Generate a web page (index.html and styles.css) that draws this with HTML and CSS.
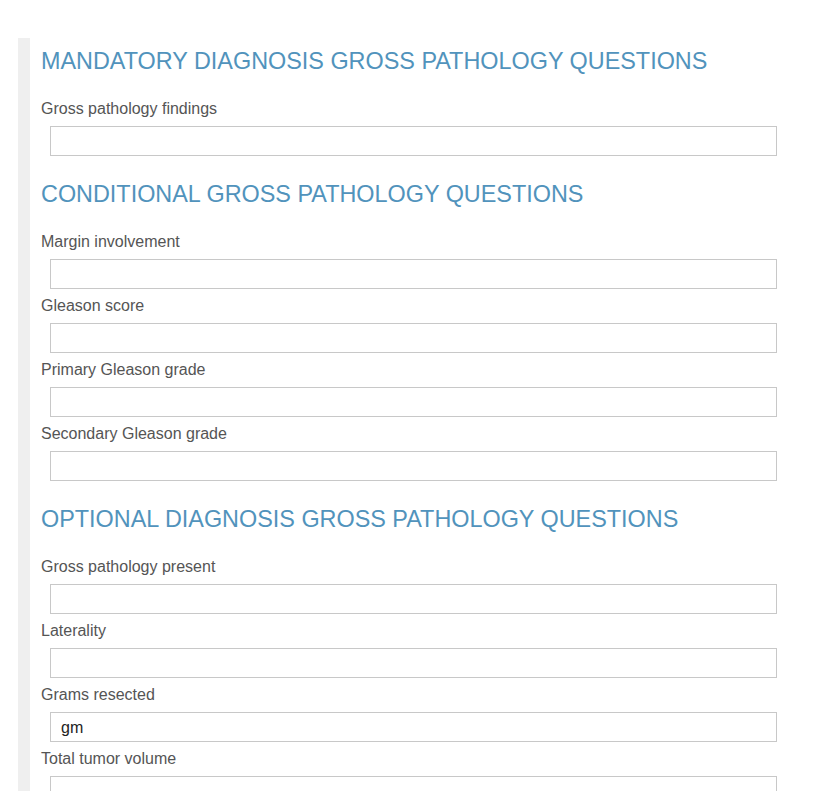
FILE: index.html
```html
<!DOCTYPE html>
<html>
<head>
<meta charset="utf-8">
<link rel="stylesheet" href="styles.css">
</head>
<body>
<div class="panel">
  <h2 class="section-title first">MANDATORY DIAGNOSIS GROSS PATHOLOGY QUESTIONS</h2>
  <div class="field"><label class="field-label">Gross pathology findings</label><input class="field-input" type="text"></div>

  <h2 class="section-title">CONDITIONAL GROSS PATHOLOGY QUESTIONS</h2>
  <div class="field"><label class="field-label">Margin involvement</label><input class="field-input" type="text"></div>
  <div class="field"><label class="field-label">Gleason score</label><input class="field-input" type="text"></div>
  <div class="field"><label class="field-label">Primary Gleason grade</label><input class="field-input" type="text"></div>
  <div class="field"><label class="field-label">Secondary Gleason grade</label><input class="field-input" type="text"></div>

  <h2 class="section-title">OPTIONAL DIAGNOSIS GROSS PATHOLOGY QUESTIONS</h2>
  <div class="field"><label class="field-label">Gross pathology present</label><input class="field-input" type="text"></div>
  <div class="field"><label class="field-label">Laterality</label><input class="field-input" type="text"></div>
  <div class="field"><label class="field-label">Grams resected</label><input class="field-input" type="text" value="gm"></div>
  <div class="field"><label class="field-label">Total tumor volume</label><input class="field-input" type="text"></div>
</div>
</body>
</html>
```

FILE: styles.css
```css
html, body {
  margin: 0;
  padding: 0;
  background: #fff;
  font-family: "Liberation Sans", Arial, sans-serif;
}

.panel {
  margin: 38px 0 0 18px;
  border-left: 12px solid #efefef;
  padding: 8px 55px 40px 11px;
  width: 736px;
}

.section-title {
  margin: 23px 0 22px 0;
  font-size: 23.4px;
  line-height: 30px;
  font-weight: normal;
  color: #5193bc;
}

.section-title.first {
  margin-top: 0;
}

.field {
  display: flex;
  flex-direction: column;
  margin-bottom: 6px;
}

.field-label {
  font-size: 16px;
  line-height: 20px;
  color: #555;
  margin-top: 1px;
  margin-bottom: 7px;
}

.field-input {
  box-sizing: border-box;
  margin-left: 9px;
  width: 727px;
  height: 30px;
  border: 1px solid #c8c8c8;
  border-radius: 0;
  padding: 2px 10px 0 10px;
  font-family: "Liberation Sans", Arial, sans-serif;
  font-size: 16px;
  color: #222;
  background: #fff;
  outline: none;
}
```
